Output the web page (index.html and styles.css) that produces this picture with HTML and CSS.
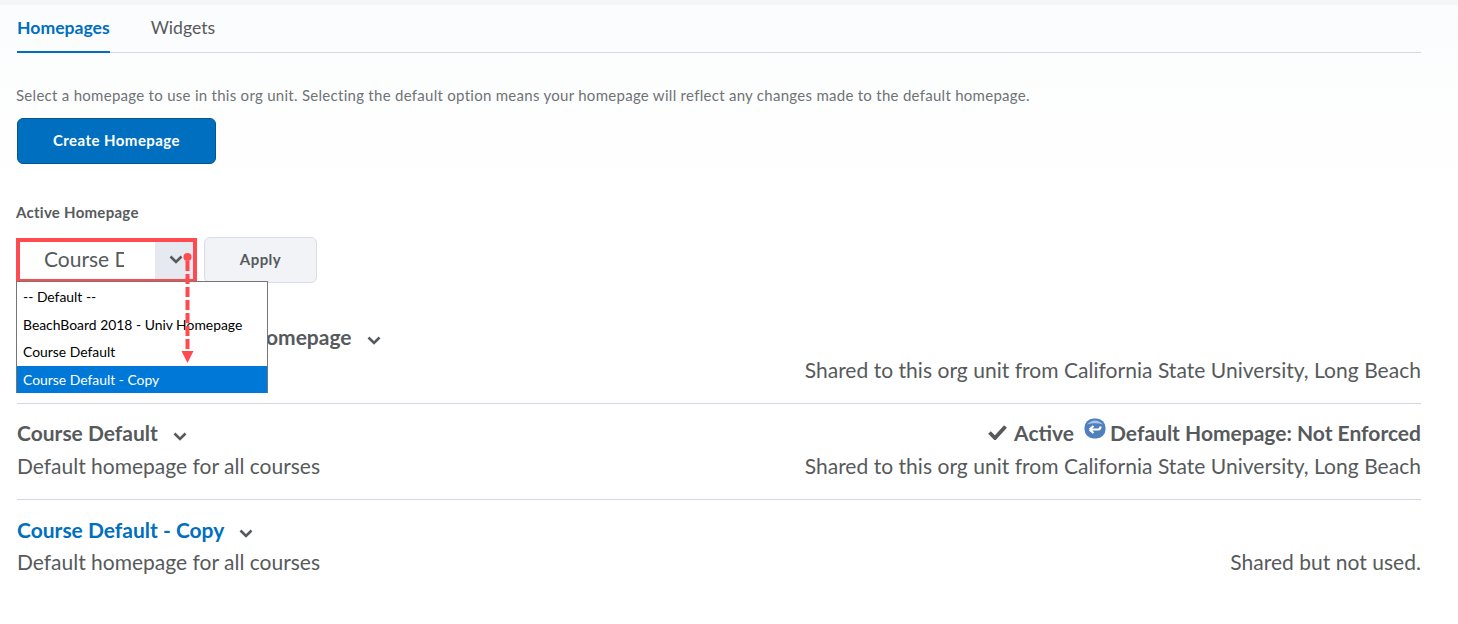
FILE: index.html
```html
<!DOCTYPE html>
<html lang="en">
<head>
<meta charset="utf-8">
<title>Homepages</title>
<link rel="stylesheet" href="styles.css">
</head>
<body>
<main class="page">
  <nav class="tabs">
    <a class="tab tab-active">Homepages</a>
    <a class="tab">Widgets</a>
  </nav>
  <p class="intro">Select a homepage to use in this org unit. Selecting the default option means your homepage will reflect any changes made to the default homepage.</p>
  <button class="btn-primary">Create Homepage</button>
  <div class="field-label">Active Homepage</div>
  <div class="select-row">
    <div class="select">
      <span class="select-text"><span class="select-clip">Course Default</span></span>
      <span class="select-arrow">
        <svg class="chev" viewBox="0 0 14 9" width="14" height="9"><path d="M1.5 1.5 7 7l5.500-5.500" fill="none" stroke="#565a5c" stroke-width="2.600"/></svg>
      </span>
    </div>
    <button class="btn-apply">Apply</button>
    <ul class="options">
      <li>-- Default --</li>
      <li>BeachBoard 2018 - Univ Homepage</li>
      <li>Course Default</li>
      <li class="option-selected">Course Default - Copy</li>
    </ul>
    <svg class="annot" viewBox="0 0 13 112" width="13" height="112">
      <circle cx="6.500" cy="5" r="4" fill="#ff4a4f"/>
      <path d="M6.500 9V100" stroke="#ff4a4f" stroke-width="4" stroke-dasharray="10 3" fill="none"/>
      <path d="M0.500 99H12.500L6.500 111Z" fill="#ff4a4f"/>
    </svg>
  </div>
  <section class="row row-first">
    <div class="row-main">
      <h2 class="row-title">BeachBoard 2018 - Univ Homepage
        <svg class="chev title-chev" viewBox="0 0 14 9" width="14" height="9"><path d="M1.5 1.5 7 7l5.500-5.500" fill="none" stroke="#565a5c" stroke-width="2.600"/></svg>
      </h2>
    </div>
    <div class="row-sub">
      <span>Default homepage</span>
      <span class="row-note">Shared to this org unit from California State University, Long Beach</span>
    </div>
  </section>
  <section class="row">
    <div class="row-main">
      <h2 class="row-title">Course Default
        <svg class="chev title-chev" viewBox="0 0 14 9" width="14" height="9"><path d="M1.5 1.5 7 7l5.500-5.500" fill="none" stroke="#565a5c" stroke-width="2.600"/></svg>
      </h2>
      <div class="status">
        <svg class="check" viewBox="0 0 19 15" width="19" height="15"><path d="M1.500 7.500 7 13 17.500 1.500" fill="none" stroke="#565a5c" stroke-width="3.800"/></svg>
        <span class="status-active">Active</span>
        <svg class="badge" viewBox="0 0 22 21" width="22" height="21">
          <rect x="0.500" y="0.500" width="21" height="20" rx="9" fill="#4f7fbd"/>
          <path d="M3 6.500Q11 -1.500 19 6.500Q11 4 3 6.500Z" fill="#a9c6e8"/>
          <path d="M5.500 11.500H14Q16.500 11.500 16.500 8.500M5.500 11.500l4-3.500M5.500 11.500l4 3.500" fill="none" stroke="#fff" stroke-width="2.200"/>
        </svg>
        <span>Default Homepage: Not Enforced</span>
      </div>
    </div>
    <div class="row-sub">
      <span>Default homepage for all courses</span>
      <span class="row-note">Shared to this org unit from California State University, Long Beach</span>
    </div>
  </section>
  <section class="row row-last">
    <div class="row-main">
      <h2 class="row-title row-title-link">Course Default - Copy
        <svg class="chev title-chev" viewBox="0 0 14 9" width="14" height="9"><path d="M1.5 1.5 7 7l5.500-5.500" fill="none" stroke="#565a5c" stroke-width="2.600"/></svg>
      </h2>
    </div>
    <div class="row-sub">
      <span>Default homepage for all courses</span>
      <span class="row-note">Shared but not used.</span>
    </div>
  </section>
</main>
</body>
</html>
```
FILE: styles.css
```css
* { box-sizing: border-box; }
html, body { margin: 0; padding: 0; }
body {
  font-family: Lato, "Open Sans", sans-serif;
  color: #565a5c;
  background: #fff;
  height: 624px;
  overflow: hidden;
}
.page {
  padding: 0 37px 0 17px;
  height: 624px;
  background: linear-gradient(#fbfcfd, #ffffff 190px);
  border-top: 5px solid #f5f6f8;
}
.tabs {
  display: flex;
  gap: 41px;
  height: 48px;
  border-bottom: 1px solid #d3d9e3;
}
.tab {
  font-size: 17.600px;
  line-height: 22px;
  padding-top: 12px;
  height: 47px;
  color: #565a5c;
}
.tab-active {
  color: #006fbf;
  font-weight: 700;
  border-bottom: 2px solid #006fbf;
  height: 48px;
}
.intro {
  margin: 32px 0 0 -1px;
  font-size: 15px;
  line-height: 20px;
  letter-spacing: 0.28px;
  color: #6e7376;
}
.btn-primary {
  display: block;
  margin-top: 13px;
  width: 199px;
  height: 46px;
  padding-bottom: 4px;
  border: 1px solid #00588f;
  border-radius: 6px;
  background: #006fbf;
  color: #fff;
  font: 700 15px Lato, sans-serif;
  letter-spacing: 0.45px;
}
.field-label {
  margin: 39px 0 0 -1px;
  font-size: 15px;
  line-height: 18px;
  letter-spacing: 0.27px;
  font-weight: 700;
  color: #565a5c;
}
.select-row {
  position: relative;
  display: flex;
  gap: 7px;
  margin-top: 16px;
  height: 46px;
}
.select {
  display: flex;
  width: 181px;
  height: 45px;
  margin: 1px 0 0 -1px;
  border: 4px solid #ff4a4f;
  background: #fff;
}
.select-text {
  flex: 1;
  padding-left: 24px;
  font-size: 21px;
  line-height: 34px;
  color: #565a5c;
}
.select-clip {
  display: block;
  width: 80px;
  overflow: hidden;
  white-space: nowrap;
}
.select-arrow {
  display: flex;
  align-items: center;
  justify-content: center;
  width: 38px;
  padding-bottom: 2px;
  background: #e6e9f0;
}
.select-arrow .chev { margin-left: 3px; }
.btn-apply {
  width: 113px;
  height: 46px;
  padding-bottom: 4px;
  border: 1px solid #d9dde5;
  border-radius: 6px;
  background: #f1f3f6;
  color: #565a5c;
  font: 700 15px Lato, sans-serif;
  letter-spacing: 0.45px;
}
.options {
  position: absolute;
  left: -1px;
  top: 44px;
  width: 252px;
  height: 112px;
  margin: 0;
  padding: 1px 0 0;
  list-style: none;
  background: #fff;
  border: 1px solid #767676;
  z-index: 2;
}
.options li {
  height: 27.500px;
  line-height: 28px;
  padding-left: 6px;
  font-size: 13.900px;
  color: #000;
}
.options .option-selected {
  background: #0078d7;
  color: #fff;
}
.annot {
  position: absolute;
  left: 163.500px;
  top: 15px;
  z-index: 3;
}
.row {
  padding: 0 0 19px;
  border-bottom: 1px solid #d3d9e3;
  margin-top: 15px;
}
.row-first { margin-top: 40px; }
.row-last { border-bottom: 0; margin-top: 16px; }
.row-last .row-sub { margin-top: 4px; }
.row-main {
  display: flex;
  justify-content: space-between;
  align-items: center;
  height: 28px;
}
.row-title {
  margin: 0;
  font-size: 21px;
  line-height: 28px;
  font-weight: 700;
  color: #565a5c;
}
.row-title-link { color: #006fbf; }
.title-chev { margin-left: 10px; }
.row-sub {
  display: flex;
  justify-content: space-between;
  font-size: 21px;
  line-height: 28px;
  color: #565a5c;
  margin-top: 5px;
}
.row-note { letter-spacing: 0.03px; }
.status {
  display: flex;
  align-items: center;
  margin-top: -2px;
  font-size: 21px;
  font-weight: 700;
}
.check { margin-right: 7px; }
.status-active { margin-right: 10px; }
.badge { margin-right: 4px; margin-top: -8px; }
```
